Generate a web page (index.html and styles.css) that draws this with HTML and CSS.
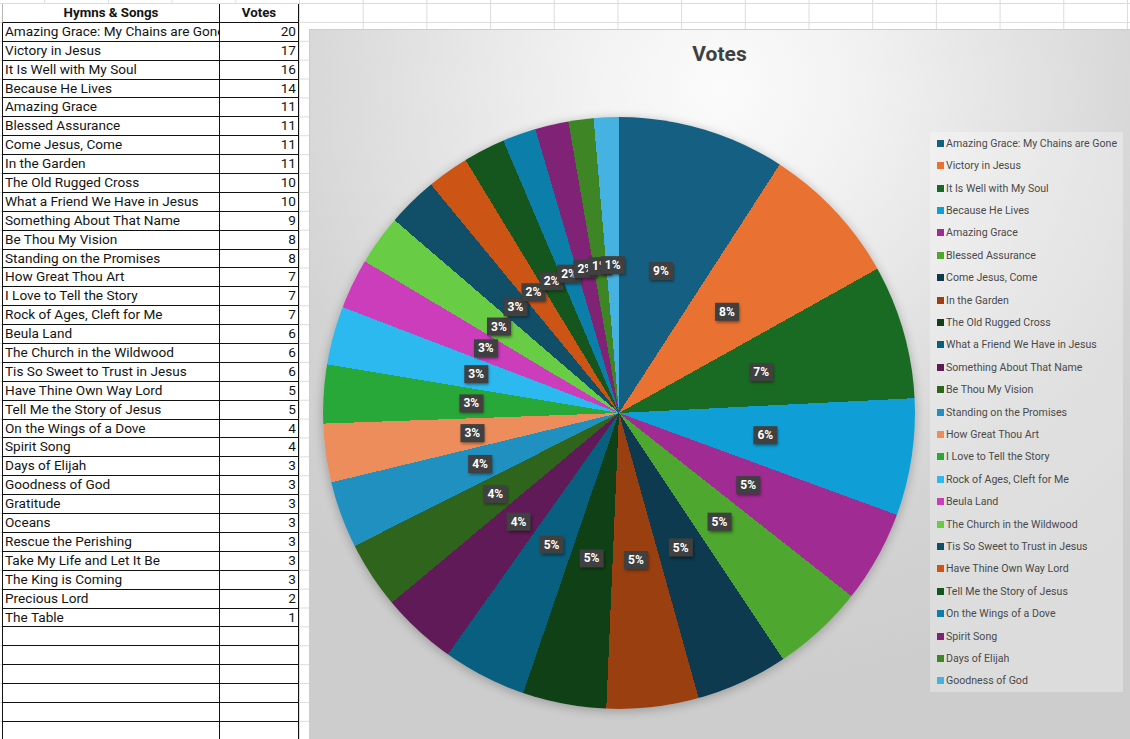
FILE: index.html
```html
<!DOCTYPE html>
<html>
<head>
<meta charset="utf-8">
<title>Hymns &amp; Songs Votes</title>
<link rel="stylesheet" href="styles.css">
</head>
<body>
<div class="sheet">
  <div class="table">
    <div class="cell head name">Hymns &amp; Songs</div><div class="cell head num">Votes</div>
    <div class="cell name">Amazing Grace: My Chains are Gone</div><div class="cell num">20</div>
    <div class="cell name">Victory in Jesus</div><div class="cell num">17</div>
    <div class="cell name">It Is Well with My Soul</div><div class="cell num">16</div>
    <div class="cell name">Because He Lives</div><div class="cell num">14</div>
    <div class="cell name">Amazing Grace</div><div class="cell num">11</div>
    <div class="cell name">Blessed Assurance</div><div class="cell num">11</div>
    <div class="cell name">Come Jesus, Come</div><div class="cell num">11</div>
    <div class="cell name">In the Garden</div><div class="cell num">11</div>
    <div class="cell name">The Old Rugged Cross</div><div class="cell num">10</div>
    <div class="cell name">What a Friend We Have in Jesus</div><div class="cell num">10</div>
    <div class="cell name">Something About That Name</div><div class="cell num">9</div>
    <div class="cell name">Be Thou My Vision</div><div class="cell num">8</div>
    <div class="cell name">Standing on the Promises</div><div class="cell num">8</div>
    <div class="cell name">How Great Thou Art</div><div class="cell num">7</div>
    <div class="cell name">I Love to Tell the Story</div><div class="cell num">7</div>
    <div class="cell name">Rock of Ages, Cleft for Me</div><div class="cell num">7</div>
    <div class="cell name">Beula Land</div><div class="cell num">6</div>
    <div class="cell name">The Church in the Wildwood</div><div class="cell num">6</div>
    <div class="cell name">Tis So Sweet to Trust in Jesus</div><div class="cell num">6</div>
    <div class="cell name">Have Thine Own Way Lord</div><div class="cell num">5</div>
    <div class="cell name">Tell Me the Story of Jesus</div><div class="cell num">5</div>
    <div class="cell name">On the Wings of a Dove</div><div class="cell num">4</div>
    <div class="cell name">Spirit Song</div><div class="cell num">4</div>
    <div class="cell name">Days of Elijah</div><div class="cell num">3</div>
    <div class="cell name">Goodness of God</div><div class="cell num">3</div>
    <div class="cell name">Gratitude</div><div class="cell num">3</div>
    <div class="cell name">Oceans</div><div class="cell num">3</div>
    <div class="cell name">Rescue the Perishing</div><div class="cell num">3</div>
    <div class="cell name">Take My Life and Let It Be</div><div class="cell num">3</div>
    <div class="cell name">The King is Coming</div><div class="cell num">3</div>
    <div class="cell name">Precious Lord</div><div class="cell num">2</div>
    <div class="cell name">The Table</div><div class="cell num">1</div>
    <div class="cell name"></div><div class="cell num"></div>
    <div class="cell name"></div><div class="cell num"></div>
    <div class="cell name"></div><div class="cell num"></div>
    <div class="cell name"></div><div class="cell num"></div>
    <div class="cell name"></div><div class="cell num"></div>
    <div class="cell name"></div><div class="cell num"></div>
    <div class="cell name"></div><div class="cell num"></div>
  </div>
</div>

<div class="chart">
  <div class="title">Votes</div>
  <div class="chart-body">
    <div class="pie">
      <div class="anchor" style="--a:16.438deg"><span class="lbl">9%</span></div>
      <div class="anchor" style="--a:46.849deg"><span class="lbl">8%</span></div>
      <div class="anchor" style="--a:73.973deg"><span class="lbl">7%</span></div>
      <div class="anchor" style="--a:98.630deg"><span class="lbl">6%</span></div>
      <div class="anchor" style="--a:119.178deg"><span class="lbl">5%</span></div>
      <div class="anchor" style="--a:137.260deg"><span class="lbl">5%</span></div>
      <div class="anchor" style="--a:155.342deg"><span class="lbl">5%</span></div>
      <div class="anchor" style="--a:173.425deg"><span class="lbl">5%</span></div>
      <div class="anchor" style="--a:190.685deg"><span class="lbl">5%</span></div>
      <div class="anchor" style="--a:207.123deg"><span class="lbl">5%</span></div>
      <div class="anchor" style="--a:222.740deg"><span class="lbl">4%</span></div>
      <div class="anchor" style="--a:236.712deg"><span class="lbl">4%</span></div>
      <div class="anchor" style="--a:249.863deg"><span class="lbl">4%</span></div>
      <div class="anchor" style="--a:262.192deg"><span class="lbl">3%</span></div>
      <div class="anchor" style="--a:273.699deg"><span class="lbl">3%</span></div>
      <div class="anchor" style="--a:285.205deg"><span class="lbl">3%</span></div>
      <div class="anchor" style="--a:295.890deg"><span class="lbl">3%</span></div>
      <div class="anchor" style="--a:305.753deg"><span class="lbl">3%</span></div>
      <div class="anchor" style="--a:315.616deg"><span class="lbl">3%</span></div>
      <div class="anchor" style="--a:324.658deg"><span class="lbl">2%</span></div>
      <div class="anchor" style="--a:332.877deg"><span class="lbl">2%</span></div>
      <div class="anchor" style="--a:340.274deg"><span class="lbl">2%</span></div>
      <div class="anchor" style="--a:346.849deg"><span class="lbl">2%</span></div>
      <div class="anchor" style="--a:352.603deg"><span class="lbl">1%</span></div>
      <div class="anchor" style="--a:357.534deg"><span class="lbl">1%</span></div>
    </div>
    <ul class="legend">
      <li><i class="sw s1"></i>Amazing Grace: My Chains are Gone</li>
      <li><i class="sw s2"></i>Victory in Jesus</li>
      <li><i class="sw s3"></i>It Is Well with My Soul</li>
      <li><i class="sw s4"></i>Because He Lives</li>
      <li><i class="sw s5"></i>Amazing Grace</li>
      <li><i class="sw s6"></i>Blessed Assurance</li>
      <li><i class="sw s7"></i>Come Jesus, Come</li>
      <li><i class="sw s8"></i>In the Garden</li>
      <li><i class="sw s9"></i>The Old Rugged Cross</li>
      <li><i class="sw s10"></i>What a Friend We Have in Jesus</li>
      <li><i class="sw s11"></i>Something About That Name</li>
      <li><i class="sw s12"></i>Be Thou My Vision</li>
      <li><i class="sw s13"></i>Standing on the Promises</li>
      <li><i class="sw s14"></i>How Great Thou Art</li>
      <li><i class="sw s15"></i>I Love to Tell the Story</li>
      <li><i class="sw s16"></i>Rock of Ages, Cleft for Me</li>
      <li><i class="sw s17"></i>Beula Land</li>
      <li><i class="sw s18"></i>The Church in the Wildwood</li>
      <li><i class="sw s19"></i>Tis So Sweet to Trust in Jesus</li>
      <li><i class="sw s20"></i>Have Thine Own Way Lord</li>
      <li><i class="sw s21"></i>Tell Me the Story of Jesus</li>
      <li><i class="sw s22"></i>On the Wings of a Dove</li>
      <li><i class="sw s23"></i>Spirit Song</li>
      <li><i class="sw s24"></i>Days of Elijah</li>
      <li><i class="sw s25"></i>Goodness of God</li>
    </ul>
  </div>
</div>
</body>
</html>
```

FILE: styles.css
```css
html, body {
  margin: 0;
  padding: 0;
  width: 1130px;
  height: 739px;
  overflow: hidden;
  background: #fff;
}

body {
  position: relative;
  font-family: Roboto, "Liberation Sans", sans-serif;
  background-image:
    linear-gradient(to right, #dcdcdc 1px, transparent 1px),
    linear-gradient(to bottom, #dcdcdc 1px, transparent 1px);
  background-size: 63.7px 100%, 100% 18.9px;
  background-position: 299px 0, 0 3px;
}

.sheet {
  padding: 4px 0 0 2px;
}

.table {
  display: grid;
  grid-template-columns: 218px 79px;
  grid-auto-rows: 18.9px;
  background: #fff;
  width: 297px;
}

.cell {
  box-sizing: border-box;
  border-right: 1px solid #111;
  border-bottom: 1px solid #111;
  font-size: 13.6px;
  line-height: 17.9px;
  color: #141414;
  white-space: nowrap;
  overflow: hidden;
  text-overflow: clip;
}

.cell.name {
  border-left: 1px solid #111;
  padding-left: 2px;
}

.cell.num {
  text-align: right;
  padding-right: 2px;
}

.cell.head {
  font-weight: 700;
  text-align: center;
  padding: 0;
  font-size: 13.3px;
}

.cell.head.name {
  border-left-color: #b5b5b5;
}

/* chart object floating over the grid */
.chart {
  position: absolute;
  left: 309px;
  top: 29px;
  width: 823px;
  height: 720px;
  box-sizing: border-box;
  border: 1px solid #cdcdcd;
  background: radial-gradient(ellipse 75% 85% at 50% 8%, #fbfbfb 0%, #f2f2f2 22%, #e2e2e2 50%, #d3d3d3 75%, #cdcdcd 100%);
}

.title {
  padding-top: 12px;
  padding-right: 2px;
  text-align: center;
  font-size: 21px;
  line-height: 25px;
  font-weight: 700;
  color: #404040;
}

.chart-body {
  display: flex;
  align-items: flex-start;
  padding-left: 13px;
  margin-top: 50px;
}

.pie {
  position: relative;
  flex: none;
  width: 592px;
  height: 592px;
  border-radius: 50%;
  box-shadow: 0 2px 10px 1px rgba(0, 0, 0, 0.22);
  background: conic-gradient(
    #156082 0deg 32.877deg,
    #e97132 0 60.822deg,
    #196b24 0 87.123deg,
    #0f9ed5 0 110.137deg,
    #a02b93 0 128.219deg,
    #4ea72e 0 146.301deg,
    #0d3a4e 0 164.384deg,
    #993f10 0 182.466deg,
    #0f4016 0 198.904deg,
    #095f80 0 215.342deg,
    #601a58 0 230.137deg,
    #2f641c 0 243.288deg,
    #1f90c0 0 256.438deg,
    #ed8d5b 0 267.945deg,
    #27a838 0 279.452deg,
    #2cb9f0 0 290.959deg,
    #cb3dbb 0 300.822deg,
    #69cc45 0 310.685deg,
    #114e68 0 320.548deg,
    #cc5516 0 328.767deg,
    #14561d 0 336.986deg,
    #0c7eaa 0 343.562deg,
    #802275 0 350.137deg,
    #3e8625 0 355.068deg,
    #46b2e1 0 360deg
  );
}

.anchor {
  position: absolute;
  left: 50%;
  top: 50%;
  width: 0;
  height: 0;
  transform: rotate(var(--a)) translateY(-148px) rotate(calc(-1 * var(--a)));
}

.lbl {
  position: absolute;
  left: 0;
  top: 0;
  transform: translate(-50%, -50%);
  display: block;
  padding: 0 4px;
  height: 18px;
  line-height: 18px;
  background: #404040;
  color: #fff;
  font-size: 12px;
  font-weight: 700;
  white-space: nowrap;
  box-shadow: 1px 2px 3px rgba(0, 0, 0, 0.45);
}

.legend {
  list-style: none;
  margin: 15px 0 0 15px;
  padding: 0;
  width: 193px;
  background: rgba(255, 255, 255, 0.3);
}

.legend li {
  display: flex;
  align-items: center;
  height: 22.42px;
  padding-left: 7px;
  font-size: 10.6px;
  color: #4a4a4a;
  white-space: nowrap;
}

.sw {
  display: block;
  width: 7px;
  height: 7px;
  margin-right: 2px;
  flex: none;
}

.s1 { background: #156082; }
.s2 { background: #e97132; }
.s3 { background: #196b24; }
.s4 { background: #0f9ed5; }
.s5 { background: #a02b93; }
.s6 { background: #4ea72e; }
.s7 { background: #0d3a4e; }
.s8 { background: #993f10; }
.s9 { background: #0f4016; }
.s10 { background: #095f80; }
.s11 { background: #601a58; }
.s12 { background: #2f641c; }
.s13 { background: #1f90c0; }
.s14 { background: #ed8d5b; }
.s15 { background: #27a838; }
.s16 { background: #2cb9f0; }
.s17 { background: #cb3dbb; }
.s18 { background: #69cc45; }
.s19 { background: #114e68; }
.s20 { background: #cc5516; }
.s21 { background: #14561d; }
.s22 { background: #0c7eaa; }
.s23 { background: #802275; }
.s24 { background: #3e8625; }
.s25 { background: #46b2e1; }
```
